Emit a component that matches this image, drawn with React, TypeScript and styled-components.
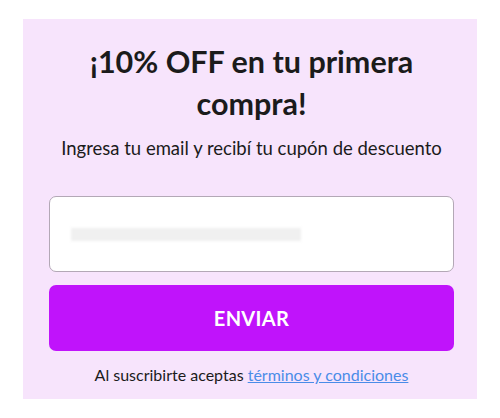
import React from 'react';
import styled, { createGlobalStyle } from 'styled-components';

const GlobalStyle = createGlobalStyle`
  body {
    margin: 0;
    background: #ffffff;
    font-family: Lato, "Noto Sans", sans-serif;
    color: #1b1b1b;
  }
`;

const Page = styled.div`
  padding: 19px 23px;
`;

const Panel = styled.section`
  background: #f7e4fc;
  height: 380px;
  box-sizing: border-box;
  padding: 21px 23px 0 26px;
  display: flex;
  flex-direction: column;
  align-items: center;
`;

const Title = styled.h1`
  margin: 0;
  font-size: 30.5px;
  font-weight: 700;
  line-height: 42px;
  text-align: center;
  width: 360px;
`;

const Subtitle = styled.p`
  margin: 12px 0 0;
  font-size: 18.5px;
  line-height: 24px;
  text-align: center;
`;

const EmailField = styled.label`
  margin-top: 36px;
  width: 100%;
  height: 76px;
  box-sizing: border-box;
  background: #ffffff;
  border: 1px solid #b3a8b6;
  border-radius: 7px;
  display: flex;
  align-items: center;
  padding: 0 21px;
`;

const Redacted = styled.span`
  display: block;
  width: 230px;
  height: 13px;
  background: #f0f0f0;
  filter: blur(1.5px);
`;

const SubmitButton = styled.button`
  margin-top: 13px;
  width: 100%;
  height: 66px;
  border: none;
  border-radius: 7px;
  background: #c013fb;
  color: #ffffff;
  font-family: inherit;
  font-size: 20px;
  font-weight: 700;
  letter-spacing: 0.3px;
`;

const Terms = styled.p`
  margin: 14px 0 0;
  font-size: 16px;
  text-align: center;
`;

const TermsLink = styled.a`
  color: #4a8ce8;
  text-decoration: underline;
`;

export default function App() {
  return (
    <>
      <GlobalStyle />
      <Page>
        <Panel>
          <Title>¡10% OFF en tu primera compra!</Title>
          <Subtitle>Ingresa tu email y recibí tu cupón de descuento</Subtitle>
          <EmailField>
            <Redacted />
          </EmailField>
          <SubmitButton>ENVIAR</SubmitButton>
          <Terms>
            Al suscribirte aceptas <TermsLink href="#">términos y condiciones</TermsLink>
          </Terms>
        </Panel>
      </Page>
    </>
  );
}
